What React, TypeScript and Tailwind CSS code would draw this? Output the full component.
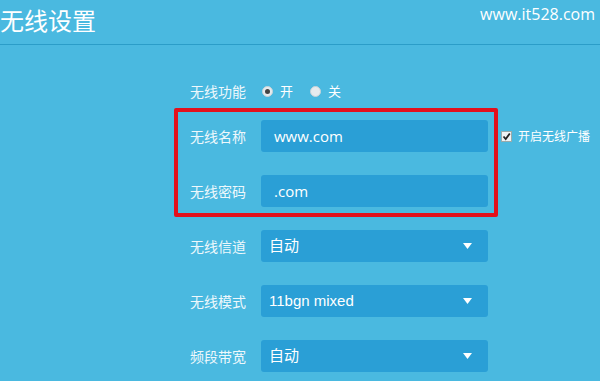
const CJK = "font-['Noto_Sans_CJK_SC','Microsoft_YaHei',sans-serif]";

function Caret() {
  return (
    <svg width="9" height="6" viewBox="0 0 9 6" className="shrink-0">
      <path d="M0 0 L9 0 L4.5 6 Z" fill="#ffffff" />
    </svg>
  );
}

function Radio({ checked, label }: { checked?: boolean; label: string }) {
  return (
    <span className="flex items-center gap-[7px]">
      <span className="flex h-[11px] w-[11px] items-center justify-center rounded-full border border-[#c9d3d8] bg-[#e6ebee]">
        {checked && <span className="h-[5px] w-[5px] rounded-full bg-[#444]" />}
      </span>
      <span className={`${CJK} text-[13px] text-white`}>{label}</span>
    </span>
  );
}

function Row({ label, children, extra }: { label: string; children: React.ReactNode; extra?: React.ReactNode }) {
  return (
    <div className="flex h-[32px] items-center">
      <span className={`${CJK} w-[71px] shrink-0 text-[14px] text-[#eef8fc]`}>{label}</span>
      {children}
      {extra}
    </div>
  );
}

function Field({ value }: { value: string }) {
  return (
    <div className="flex h-[32px] w-[227px] items-center rounded-[3px] bg-[#2a9fd6] pl-[13px] font-['Open_Sans',sans-serif] text-[15px] text-white">
      {value}
    </div>
  );
}

function Select({ value }: { value: string }) {
  return (
    <div className="flex h-[32px] w-[227px] items-center justify-between rounded-[3px] bg-[#2a9fd6] pl-[8px] pr-[16px] font-['Liberation_Sans','Noto_Sans_CJK_SC',sans-serif] text-[15px] text-white">
      <span>{value}</span>
      <Caret />
    </div>
  );
}

export default function App() {
  return (
    <div className="relative h-[381px] w-[600px] overflow-hidden bg-[#4ab9e0]">
      <header className="flex h-[45px] items-start justify-between border-b border-[#2b9dc8] pr-[5px]">
        <h1 className={`${CJK} mt-[4px] text-[24px] leading-[32px] text-white`}>无线设置</h1>
        <span className="mt-[3px] font-['Open_Sans',sans-serif] text-[16px] leading-[22px] text-white">
          www.it528.com
        </span>
      </header>

      <div className="flex flex-col pl-[190px] pt-[30px]">
        <div className="flex h-[32px] items-center">
          <span className={`${CJK} w-[72px] shrink-0 text-[14px] text-[#eef8fc]`}>无线功能</span>
          <div className="flex items-center gap-[17px]">
            <Radio checked label="开" />
            <Radio label="关" />
          </div>
        </div>

        <div className="mt-[13px] flex flex-col gap-[23px]">
          <Row
            label="无线名称"
            extra={
              <span className="ml-[13px] flex items-center gap-[6px]">
                <span className="flex h-[11px] w-[11px] items-center justify-center border border-[#9aa] bg-[#eef2f4]">
                  <svg width="9" height="9" viewBox="0 0 9 9">
                    <path d="M1.5 4.5 L3.7 7 L7.8 1.5" stroke="#222" strokeWidth="1.8" fill="none" />
                  </svg>
                </span>
                <span className={`${CJK} text-[12px] text-white`}>开启无线广播</span>
              </span>
            }
          >
            <Field value="www.com" />
          </Row>
          <Row label="无线密码">
            <Field value=".com" />
          </Row>
          <Row label="无线信道">
            <Select value="自动" />
          </Row>
          <Row label="无线模式">
            <Select value="11bgn mixed" />
          </Row>
          <Row label="频段带宽">
            <Select value="自动" />
          </Row>
        </div>
      </div>

      {/* red annotation box drawn over the screenshot */}
      <div className="pointer-events-none absolute left-[174px] top-[108px] h-[109px] w-[324px] rounded-[2px] border-[4px] border-[#e3101c]" />
    </div>
  );
}
